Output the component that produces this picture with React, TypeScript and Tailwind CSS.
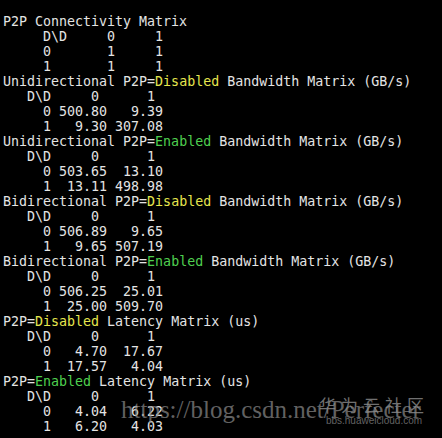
type Seg = { t: string; c?: "y" | "g" };
type Line = Seg[];

const w = (t: string): Line => [{ t }];

const lines: Line[] = [
  w("P2P Connectivity Matrix"),
  w("     D\\D     0     1"),
  w("     0       1     1"),
  w("     1       1     1"),
  [{ t: "Unidirectional P2P=" }, { t: "Disabled", c: "y" }, { t: " Bandwidth Matrix (GB/s)" }],
  w("   D\\D     0      1"),
  w("     0 500.80   9.39"),
  w("     1   9.30 307.08"),
  [{ t: "Unidirectional P2P=" }, { t: "Enabled", c: "g" }, { t: " Bandwidth Matrix (GB/s)" }],
  w("   D\\D     0      1"),
  w("     0 503.65  13.10"),
  w("     1  13.11 498.98"),
  [{ t: "Bidirectional P2P=" }, { t: "Disabled", c: "y" }, { t: " Bandwidth Matrix (GB/s)" }],
  w("   D\\D     0      1"),
  w("     0 506.89   9.65"),
  w("     1   9.65 507.19"),
  [{ t: "Bidirectional P2P=" }, { t: "Enabled", c: "g" }, { t: " Bandwidth Matrix (GB/s)" }],
  w("   D\\D     0      1"),
  w("     0 506.25  25.01"),
  w("     1  25.00 509.70"),
  [{ t: "P2P=" }, { t: "Disabled", c: "y" }, { t: " Latency Matrix (us)" }],
  w("   D\\D     0      1"),
  w("     0   4.70  17.67"),
  w("     1  17.57   4.04"),
  [{ t: "P2P=" }, { t: "Enabled", c: "g" }, { t: " Latency Matrix (us)" }],
  w("   D\\D     0      1"),
  w("     0   4.04   6.22"),
  w("     1   6.20   4.03"),
];

export default function App() {
  return (
    <div className="relative w-[442px] h-[438px] overflow-hidden bg-black">
      <div className="pt-[14px] pl-[3px] font-['DejaVu_Sans_Mono',monospace] text-[13.3px] leading-[15px] text-[#e4e4e4]">
        {lines.map((line, i) => (
          <div key={i} className="whitespace-pre h-[15px]">
            {line.map((s, j) => (
              <span
                key={j}
                className={
                  s.c === "y" ? "text-[#e6e64e]" : s.c === "g" ? "text-[#4fcf4f]" : undefined
                }
              >
                {s.t}
              </span>
            ))}
          </div>
        ))}
      </div>

      {/* watermarks */}
      <div className="absolute left-[121px] top-[397px] font-['Liberation_Serif',serif] text-[25px] leading-[25px] text-[#8a8a8a] opacity-70 whitespace-nowrap">
        https://blog.csdn.net/Perfecter
      </div>
      <div className="absolute left-[319px] top-[395px] flex flex-col items-center">
        <div className="font-['Noto_Sans_CJK_SC',sans-serif] text-[17px] leading-[20px] tracking-[5px] text-[#8c8c8c] opacity-80">
          华为云社区
        </div>
        <div className="font-['Liberation_Sans',sans-serif] text-[10px] leading-[11px] text-[#8c8c8c] opacity-70">
          bbs.huaweicloud.com
        </div>
      </div>
    </div>
  );
}
